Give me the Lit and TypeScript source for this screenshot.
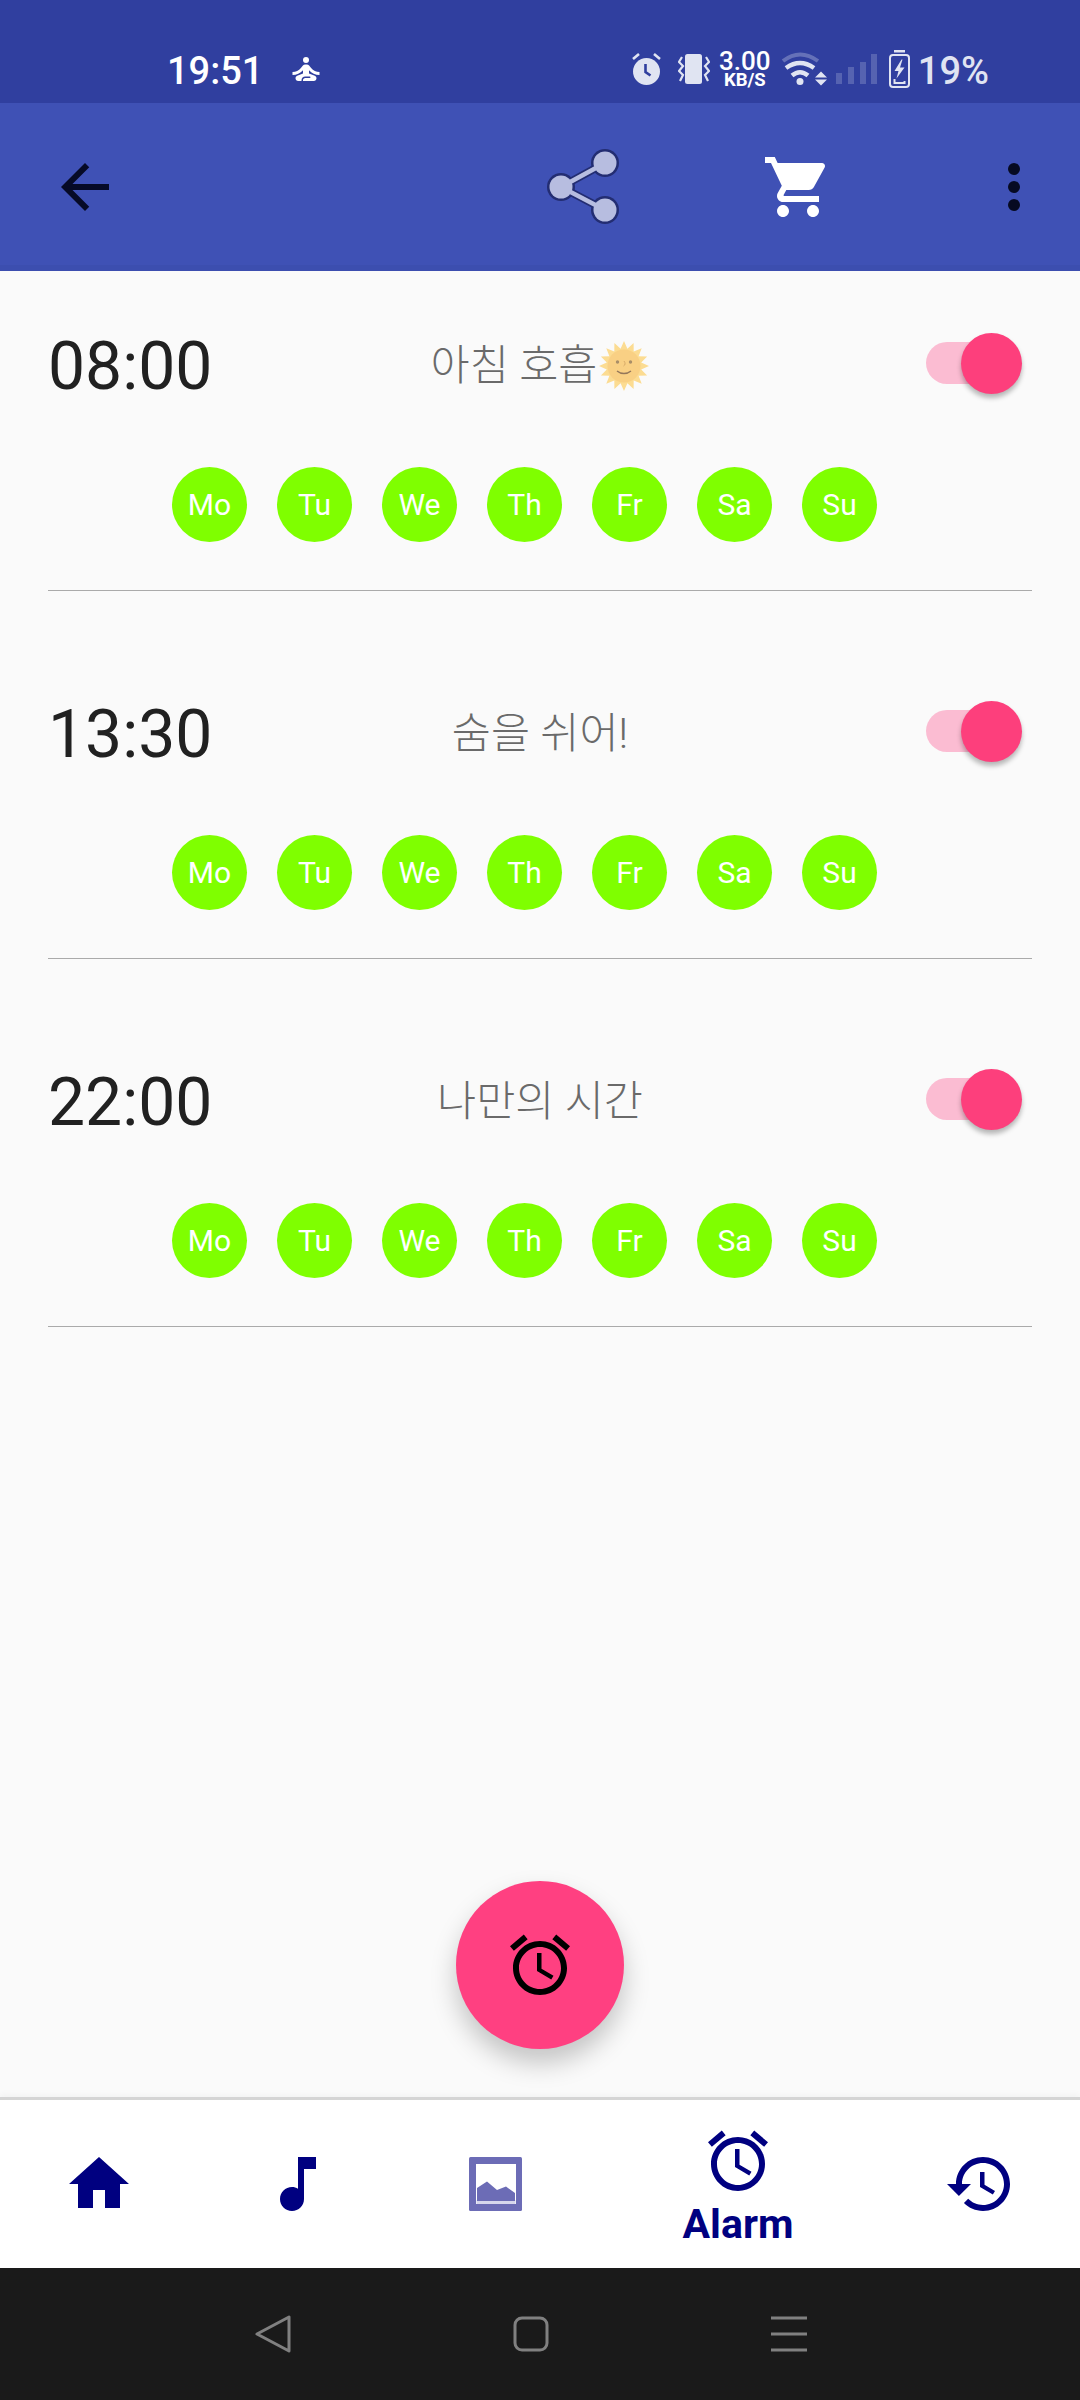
import { LitElement, css, html, svg } from "lit";
import { customElement } from "lit/decorators.js";

const DAYS = ["Mo", "Tu", "We", "Th", "Fr", "Sa", "Su"];

const ALARMS = [
  { time: "08:00", title: "아침 호흡", sun: true },
  { time: "13:30", title: "숨을 쉬어!", sun: false },
  { time: "22:00", title: "나만의 시간", sun: false }
];

const ALARM_PATH =
  "M22 5.72l-4.6-3.86-1.29 1.53 4.6 3.86L22 5.72zM7.88 3.39L6.6 1.86 2 5.71l1.29 1.53 4.59-3.85zM12.5 8H11v6l4.75 2.85.75-1.23-4-2.37V8zM12 4c-4.97 0-9 4.03-9 9s4.02 9 9 9c4.97 0 9-4.03 9-9s-4.03-9-9-9zm0 16c-3.87 0-7-3.13-7-7s3.13-7 7-7 7 3.13 7 7-3.13 7-7 7z";

function materialIcon(path: string, color: string, size = 72) {
  return html`<svg width=${size} height=${size} viewBox="0 0 24 24" fill=${color}><path d=${path}></path></svg>`;
}

// spiky outline of the sun emoji
function sunPoints() {
  const pts: string[] = [];
  for (let i = 0; i < 32; i++) {
    const r = i % 2 ? 17.5 : 25;
    const a = (i * Math.PI) / 16 - Math.PI / 2;
    pts.push(`${(25 + r * Math.cos(a)).toFixed(1)},${(25 + r * Math.sin(a)).toFixed(1)}`);
  }
  return pts.join(" ");
}

const sunIcon = html`<svg class="sun" width="50" height="50" viewBox="0 0 50 50">
  ${svg`<polygon points=${sunPoints()} fill="#fcdc92"></polygon>
  <circle cx="25" cy="25" r="16.500" fill="#f9d084"></circle>
  <circle cx="18.500" cy="21" r="1.700" fill="#a98e68"></circle>
  <circle cx="31.500" cy="21" r="1.700" fill="#a98e68"></circle>
  <path d="M25 20c1.500 2 1.500 4 -.5 5" fill="none" stroke="#d8ab68" stroke-width="1"></path>
  <path d="M18 30c4 3.400 10 3.400 14 0" fill="none" stroke="#94775a" stroke-width="1.400"></path>`}
</svg>`;

@customElement("app-root")
export class AppRoot extends LitElement {
  static styles = css`
    :host {
      display: flex;
      flex-direction: column;
      position: relative;
      width: 1080px;
      height: 2400px;
      overflow: hidden;
      background: #fafafa;
      font-family: Roboto, "Noto Sans CJK KR", sans-serif;
    }

    svg {
      display: block;
      flex: none;
    }

    .status {
      display: flex;
      align-items: center;
      height: 68px;
      padding: 35px 91px 0 167px;
      background: #303f9f;
      color: #fff;
    }

    .clock {
      font-size: 38px;
      font-weight: 500;
      line-height: 44px;
      padding-top: 3px;
    }

    .yoga {
      margin-left: 25px;
    }

    .tray {
      display: flex;
      align-items: center;
      margin-left: auto;
    }

    .speed {
      display: flex;
      flex-direction: column;
      align-items: center;
      width: 52px;
      margin: 0 10px 0 9px;
      font-weight: 500;
    }

    .speed b {
      font-size: 26px;
      font-weight: 500;
      line-height: 22px;
    }

    .speed small {
      font-size: 18.5px;
      font-weight: 700;
      line-height: 16px;
    }

    .percent {
      margin-left: 8px;
      color: #e0e4f2;
      font-size: 38px;
      font-weight: 500;
      line-height: 44px;
      padding-top: 3px;
    }

    .toolbar {
      display: flex;
      align-items: center;
      height: 168px;
      padding-left: 49px;
      background: #3f51b5;
      box-shadow: inset 0 -6px 0 #3c4eaf;
    }

    .share {
      margin-left: 427px;
      overflow: visible;
    }

    .cart {
      margin-left: 144px;
    }

    .more {
      display: flex;
      flex-direction: column;
      gap: 6px;
      margin-left: 174px;
    }

    .more i {
      width: 12px;
      height: 12px;
      border-radius: 50%;
      background: #060a22;
    }

    main {
      flex: 1;
    }

    .alarm {
      margin: 0 48px 48px;
      height: 320px;
      box-sizing: border-box;
      border-bottom: 1px solid #aaa;
    }

    .top {
      display: grid;
      grid-template-columns: 1fr auto 1fr;
      align-items: center;
      height: 120px;
      padding-top: 32px;
    }

    .time {
      color: #212121;
      font-size: 66px;
      line-height: 78px;
      padding-top: 8px;
    }

    .title {
      display: flex;
      align-items: center;
      color: #6a6a6a;
      font-size: 42.5px;
      font-weight: 300;
      line-height: 50px;
      padding-top: 6px;
    }

    .sun {
      margin-left: 2px;
    }

    .switch {
      position: relative;
      justify-self: end;
      width: 93px;
      height: 42px;
      margin-right: 13px;
      margin-top: -1px;
      border-radius: 21px;
      background: #fbbcd2;
    }

    .switch::after {
      content: "";
      position: absolute;
      top: -9px;
      right: -3px;
      width: 61px;
      height: 61px;
      border-radius: 50%;
      background: #fd3f7c;
      box-shadow: 0 4px 5px rgba(0, 0, 0, 0.28);
    }

    .days {
      display: flex;
      gap: 30px;
      margin-top: 44px;
      padding-left: 124px;
    }

    .day {
      display: flex;
      align-items: center;
      justify-content: center;
      width: 75px;
      height: 75px;
      border-radius: 50%;
      background: #7fff00;
      color: #fff;
      font-size: 30px;
    }

    .fab {
      position: absolute;
      left: 456px;
      top: 1881px;
      display: flex;
      align-items: center;
      justify-content: center;
      width: 168px;
      height: 168px;
      border-radius: 50%;
      background: #ff4081;
      box-shadow: 0 14px 26px rgba(0, 0, 0, 0.22);
    }

    .nav {
      display: grid;
      grid-template-columns: 198px 199px 196px 290px 194px;
      align-items: center;
      height: 168px;
      background: #fff;
      border-top: 3px solid #d4d4d4;
      box-shadow: 0 -3px 6px rgba(0, 0, 0, 0.03);
    }

    .item {
      display: flex;
      flex-direction: column;
      align-items: center;
      color: #000080;
    }

    .item span {
      margin-top: 7px;
      font-size: 41px;
      font-weight: 700;
      line-height: 40px;
    }

    .softkeys {
      display: flex;
      align-items: center;
      height: 132px;
      padding-left: 253px;
      background: #1a1a1a;
    }

    .softkeys svg + svg {
      margin-left: 221px;
    }
  `;

  renderStatus() {
    return html`
      <div class="status">
        <span class="clock">19:51</span>
        <svg class="yoga" width="36" height="36" viewBox="0 0 24 24" fill="#fff">
          <circle cx="12" cy="6" r="2"></circle>
          <path d="M21 16v-2c-2.24 0-4.16-.96-5.6-2.68l-1.34-1.6c-.38-.46-.94-.72-1.53-.72h-1.05c-.59 0-1.15.26-1.53.72l-1.34 1.6C7.16 13.04 5.24 14 3 14v2c2.77 0 5.19-1.17 7-3.25V15l-3.88 1.55c-.67.27-1.12.93-1.12 1.66C5 19.2 5.8 20 6.79 20H9v-.5c0-1.38 1.12-2.5 2.5-2.5h3c.28 0 .5.22.5.5s-.22.5-.5.5h-3c-.83 0-1.5.67-1.5 1.5v.5h7.21c.99 0 1.79-.8 1.79-1.79 0-.73-.45-1.39-1.12-1.66L14 15v-2.25c1.81 2.08 4.23 3.25 7 3.25z"></path>
        </svg>
        <div class="tray">
          <svg width="31" height="34" viewBox="0 0 31 34">
            <circle cx="15.500" cy="19.500" r="13.500" fill="#e0e4f2"></circle>
            <path d="M2 7l6-5M29 7l-6-5" stroke="#e0e4f2" stroke-width="2.600" fill="none"></path>
            <path d="M14.500 12v8l5 3.500" stroke="#303f9f" stroke-width="2.600" fill="none"></path>
          </svg>
          <svg style="margin-left:16px" width="32" height="30" viewBox="0 0 32 30">
            <rect x="7" y="0" width="17" height="30" rx="2.500" fill="#e0e4f2"></rect>
            <path d="M4 3L1 8l4 4-4 5 4 4-3 6M28 3l3 5-4 4 4 5-4 4 3 6" stroke="#e0e4f2" stroke-width="2.200" fill="none"></path>
          </svg>
          <div class="speed"><b>3.00</b><small>KB/S</small></div>
          <svg width="46" height="34" viewBox="0 0 46 34">
            <path d="M2 9Q19-4 37 9" stroke="#e0e4f2" stroke-opacity=".3" stroke-width="4" fill="none"></path>
            <path d="M5 16Q19 6 33 16M11 23.500Q19 17 27 23.500" stroke="#e0e4f2" stroke-width="4.500" fill="none"></path>
            <circle cx="19" cy="29.500" r="3.500" fill="#e0e4f2"></circle>
            <path d="M34 25.500l6-6 6 6zM34 27.500h12l-6 6z" fill="#e0e4f2"></path>
          </svg>
          <svg style="margin-left:9px" width="41" height="30" viewBox="0 0 41 30" fill="#e0e4f2" fill-opacity=".22">
            <rect x="0" y="19" width="6" height="11"></rect>
            <rect x="12" y="13" width="6" height="17"></rect>
            <rect x="24" y="8" width="6" height="22"></rect>
            <rect x="35" y="0" width="6" height="30"></rect>
          </svg>
          <svg style="margin-left:12px" width="21" height="38" viewBox="0 0 21 38">
            <rect x="5" y="0" width="11" height="2.500" fill="#e0e4f2"></rect>
            <rect x="1" y="5" width="19" height="32" rx="3" fill="none" stroke="#e0e4f2" stroke-width="2"></rect>
            <path d="M12.500 9.500l-7 11.500h4l-2 7.500 8-11h-4.500l2.500-8z" fill="#e0e4f2"></path>
            <path d="M5.500 29v4h10v-2" fill="none" stroke="#e0e4f2" stroke-width="2"></path>
          </svg>
          <span class="percent">19%</span>
        </div>
      </div>
    `;
  }

  renderToolbar() {
    return html`
      <div class="toolbar">
        ${materialIcon("M20 11H7.83l5.59-5.59L12 4l-8 8 8 8 1.41-1.41L7.83 13H20v-2z", "#060a26")}
        <svg class="share" width="70" height="72" viewBox="0 0 70 72">
          <path d="M13 36L57 12M13 36L57 59" stroke="#232d72" stroke-width="8" fill="none"></path>
          <circle cx="13" cy="36" r="14" fill="#232d72"></circle>
          <circle cx="57" cy="12" r="14" fill="#232d72"></circle>
          <circle cx="57" cy="59" r="14" fill="#232d72"></circle>
          <path d="M13 36L57 12M13 36L57 59" stroke="#b7bde0" stroke-width="4.500" fill="none"></path>
          <circle cx="13" cy="36" r="11.500" fill="#b7bde0"></circle>
          <circle cx="57" cy="12" r="11.500" fill="#b7bde0"></circle>
          <circle cx="57" cy="59" r="11.500" fill="#b7bde0"></circle>
        </svg>
        <div class="cart">
          ${materialIcon(
            "M7 18c-1.1 0-1.99.9-1.99 2S5.9 22 7 22s2-.9 2-2-.9-2-2-2zM1 2v2h2l3.6 7.59-1.35 2.45c-.16.28-.25.61-.25.96 0 1.1.9 2 2 2h12v-2H7.42c-.14 0-.25-.11-.25-.25l.03-.12.9-1.63h7.45c.75 0 1.41-.41 1.75-1.03l3.58-6.49c.08-.14.12-.31.12-.48 0-.55-.45-1-1-1H5.21l-.94-2H1zm16 16c-1.1 0-1.99.9-1.99 2s.89 2 1.99 2 2-.9 2-2-.9-2-2-2z",
            "#fff"
          )}
        </div>
        <div class="more"><i></i><i></i><i></i></div>
      </div>
    `;
  }

  renderAlarm(alarm: { time: string; title: string; sun: boolean }) {
    return html`
      <section class="alarm">
        <div class="top">
          <span class="time">${alarm.time}</span>
          <span class="title">${alarm.title}${alarm.sun ? sunIcon : ""}</span>
          <div class="switch"></div>
        </div>
        <div class="days">${DAYS.map((d) => html`<div class="day">${d}</div>`)}</div>
      </section>
    `;
  }

  renderNav() {
    const navy = "#000080";
    return html`
      <nav class="nav">
        <div class="item">${materialIcon("M10 20v-6h4v6h5v-8h3L12 3 2 12h3v8z", navy)}</div>
        <div class="item">
          ${materialIcon("M12 3v10.55c-.59-.34-1.27-.55-2-.55-2.21 0-4 1.79-4 4s1.79 4 4 4 4-1.79 4-4V7h4V3h-6z", navy)}
        </div>
        <div class="item">
          <svg width="53" height="54" viewBox="0 0 53 54">
            <rect width="53" height="54" rx="1.500" fill="#6c6cb6"></rect>
            <rect x="7" y="7" width="40" height="40" fill="#fff"></rect>
            <rect x="7.500" y="43" width="39" height="4" fill="#d6d6ec"></rect>
            <path d="M8 31l10-6.500 10 8.500 9-3.500 9 6.500V44H8z" fill="#6c6cb6"></path>
          </svg>
        </div>
        <div class="item">
          ${materialIcon(ALARM_PATH, navy)}
          <span>Alarm</span>
        </div>
        <div class="item">
          ${materialIcon(
            "M13 3c-4.97 0-9 4.03-9 9H1l3.89 3.89.07.14L9 12H6c0-3.87 3.13-7 7-7s7 3.13 7 7-3.13 7-7 7c-1.93 0-3.68-.79-4.94-2.06l-1.42 1.42C8.27 19.99 10.51 21 13 21c4.97 0 9-4.03 9-9s-4.03-9-9-9zm-1 5v5l4.28 2.54.72-1.21-3.5-2.08V8H12z",
            navy
          )}
        </div>
      </nav>
    `;
  }

  render() {
    return html`
      ${this.renderStatus()} ${this.renderToolbar()}
      <main>${ALARMS.map((a) => this.renderAlarm(a))}</main>
      <div class="fab">${materialIcon(ALARM_PATH, "#000")}</div>
      ${this.renderNav()}
      <div class="softkeys">
        <svg width="38" height="38" viewBox="0 0 38 38" fill="none" stroke="#808080" stroke-width="3" stroke-linejoin="round">
          <path d="M4 19L36 2v34z"></path>
        </svg>
        <svg width="38" height="38" viewBox="0 0 38 38" fill="none" stroke="#808080" stroke-width="3">
          <rect x="3" y="3" width="32" height="32" rx="7"></rect>
        </svg>
        <svg width="38" height="38" viewBox="0 0 38 38" stroke="#808080" stroke-width="3">
          <path d="M0 3h36M0 19h36M0 35h36"></path>
        </svg>
      </div>
    `;
  }
}
